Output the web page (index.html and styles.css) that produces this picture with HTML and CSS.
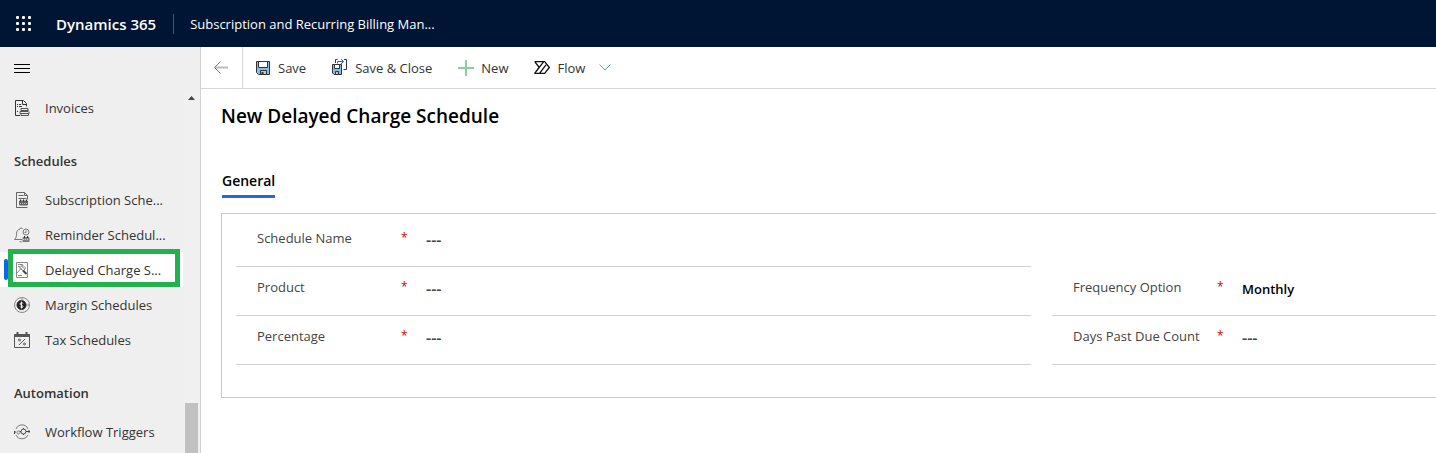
FILE: index.html
```html
<!DOCTYPE html>
<html lang="en">
<head>
<meta charset="utf-8">
<title>New Delayed Charge Schedule - Dynamics 365</title>
<link rel="stylesheet" href="styles.css">
</head>
<body>
<header class="topbar">
  <button class="launcher" type="button" aria-label="App launcher">
    <svg width="16" height="16" viewBox="0 0 16 16" fill="#fff"><rect x="0" y="0" width="3" height="3" rx="1"/><rect x="6" y="0" width="3" height="3" rx="1"/><rect x="12" y="0" width="3" height="3" rx="1"/><rect x="0" y="6" width="3" height="3" rx="1"/><rect x="6" y="6" width="3" height="3" rx="1"/><rect x="12" y="6" width="3" height="3" rx="1"/><rect x="0" y="12" width="3" height="3" rx="1"/><rect x="6" y="12" width="3" height="3" rx="1"/><rect x="12" y="12" width="3" height="3" rx="1"/></svg>
  </button>
  <a class="brand" href="#">Dynamics 365</a>
  <a class="app-name" href="#">Subscription and Recurring Billing Man...</a>
</header>
<div class="shell">
  <aside class="sidebar">
    <button class="menu-toggle" type="button" aria-label="Expand navigation">
      <svg width="16" height="9" viewBox="0 0 16 9" fill="#000"><path d="M0 0h16v1H0zM0 4h16v1H0zM0 8h16v1H0z"/></svg>
    </button>
    <div class="nav-area">
      <nav class="nav">
        <a class="nav-item" href="#">
          <svg width="16" height="16" viewBox="0 0 16 16" fill="none" stroke="#333"><path d="M6 15.500H1.500V.5h8l3 3v3M8.500.5v4h4"/><path d="M3 4.500h1M5 4.500h2M3 6.500h1M5 6.500h3M3 11.500h1"/><path d="M7 8.500h7v2H7zM6 11.500h8v-2M6 11.500v2h9v-2M7 13.500v2h7.500v-2" stroke="#555"/></svg>
          <span>Invoices</span>
        </a>
        <h2 class="nav-heading">Schedules</h2>
        <a class="nav-item" href="#">
          <svg width="16" height="16" viewBox="0 0 16 16" fill="none" stroke="#666"><path d="M13.500 15.500h-11V.5h8l3 3v4M2.500 15.500V.5M10.500.5v3h3M4.500 3.500h5M4.500 6.500h8" /><path d="M5.500 9h8v4h-8z" fill="#666"/><path d="M6.500 7.500v2M9.500 7.500v2M12.500 7.500v2" stroke="#333"/><path d="M6 11.500h7" stroke="#bbb" stroke-dasharray="1 1"/></svg>
          <span>Subscription Sche...</span>
        </a>
        <a class="nav-item" href="#">
          <svg width="16" height="16" viewBox="0 0 16 16" fill="none" stroke="#777"><path d="M8 12.500H.5c2-2 2-3.500 2-6C2.500 4 4 2.500 6 2c0-1.500 2-1.500 2.500 0M5.500 14c1 1.500 2 1.500 2.500.5"/><circle cx="12" cy="5" r="3"/><path d="M12 3.500v2h-1.500"/><path d="M9 10.500h6v4H9z" fill="#888"/><path d="M10.500 9v2M13.500 9v2" stroke="#333"/><path d="M9 12.500h6" stroke="#ccc" stroke-dasharray="1 1"/></svg>
          <span>Reminder Schedul...</span>
        </a>
        <a class="nav-item is-selected" href="#" aria-current="page">
          <svg width="16" height="16" viewBox="0 0 16 16" fill="none" stroke="#888"><path d="M2.500.5h11v15h-11z"/><path d="M4 2.500h5M4 4.500h2M4 13.500h4"/><path d="M3 11l4.500-5M7 3.500l3.500 3.500M5.500 6l3-3 3 3-2 3z"/><path d="M9 8.500l3.500 3.500" stroke="#444" stroke-width="2"/></svg>
          <span>Delayed Charge S...</span>
        </a>
        <a class="nav-item" href="#">
          <svg width="16" height="16" viewBox="0 0 16 16" fill="none" stroke="#888"><circle cx="8" cy="8" r="7.500"/><circle cx="7.500" cy="8" r="4.500" fill="#222" stroke="#222"/><path d="M8 1v3M12 8h4"/><path d="M9 6.500C8.500 5 6 5.500 6 7s3 1 3 2.500-2.500 1.500-3 0M7.500 4.500v7" stroke="#eee"/></svg>
          <span>Margin Schedules</span>
        </a>
        <a class="nav-item" href="#">
          <svg width="16" height="16" viewBox="0 0 16 16" fill="none" stroke="#555"><path d="M.5 2.500h15v13H.5z"/><path d="M.5 2.500h15v2H.5z" fill="#555"/><path d="M3.500 0v3M12.500 0v3" stroke-width="2"/><path d="M11 7l-6 6"/><circle cx="5.500" cy="8" r="1"/><circle cx="10.500" cy="12" r="1"/></svg>
          <span>Tax Schedules</span>
        </a>
        <h2 class="nav-heading">Automation</h2>
        <a class="nav-item" href="#">
          <svg width="16" height="16" viewBox="0 0 16 16" fill="none" stroke="#777"><path d="M2 5C4-.5 12-.5 14 5M2 11c2 5 10 5 12 0"/><circle cx="9.500" cy="7.500" r="2.500" stroke="#444"/><path d="M9.500 4v1M9.500 10v1M12 7.500h2M6 7.500h1" stroke="#444"/><circle cx="4.500" cy="8.500" r="1.500"/><path d="M.5 7v3M0 8h2M15 6v3M14 7.500h2" stroke="#444"/></svg>
          <span>Workflow Triggers</span>
        </a>
      </nav>
      <div class="scrollbar" aria-hidden="true">
        <svg width="7" height="4" viewBox="0 0 7 4"><path d="M0 4L3.500 0 7 4z" fill="#444"/></svg>
        <div class="scroll-thumb"></div>
      </div>
    </div>
  </aside>
  <main class="main">
    <div class="commands" role="toolbar" aria-label="Commands">
      <button class="back" type="button" aria-label="Back">
        <svg width="14" height="13" viewBox="0 0 14 13" fill="none"><path d="M1 6.500h13" stroke="#bbb" stroke-width="2"/><path d="M6.500.5l-6 6 6 6" stroke="#777"/></svg>
      </button>
      <button class="command" type="button">
        <svg width="14" height="14" viewBox="0 0 14 14"><path d="M.5.5h13v13h-11l-2-2z" fill="#83beec" stroke="#333"/><path d="M2.500.5h9v6h-9z" fill="#fff" stroke="#333"/><path d="M4.500 9.500h6v4h-6z" fill="#c8c6c4" stroke="#333"/><path d="M5.500 11h2v2h-2z" fill="#333"/></svg>
        <span>Save</span>
      </button>
      <button class="command" type="button">
        <svg class="wide" width="16" height="17" viewBox="0 0 16 17" fill="none"><path d="M.5 5.500h9v10H2l-1.500-1.500z" fill="#83beec" stroke="#333"/><path d="M2.500 5.500h5v4h-5z" fill="#fff" stroke="#333"/><path d="M3.500 12.500h3v3h-3z" fill="#c8c6c4" stroke="#333"/><path d="M3.500 4V.5h2M12 .5h2.500v10h-3" stroke="#333"/><path d="M5.500 4.500v-2h6M9 0l2.500 2.500L9 5" stroke="#106ebe"/></svg>
        <span>Save &amp; Close</span>
      </button>
      <button class="command" type="button">
        <svg class="wide" width="16" height="16" viewBox="0 0 16 16"><path d="M7 0h2v7h7v2H9v7H7V9H0V7h7z" fill="#88cfa4"/></svg>
        <span>New</span>
      </button>
      <button class="command" type="button">
        <svg class="wide" width="16" height="13" viewBox="0 0 16 13" fill="none" stroke="#111" stroke-width="1.300" stroke-linejoin="round"><path d="M.7.7h10l4.600 5.800-4.600 5.800H.7l9-11.600M.7.700l4.200 5.300M5.500 12.300l6.500-8.500M.7 12.300L5 6.500"/></svg>
        <span>Flow</span>
        <svg class="chevron" width="12" height="7" viewBox="0 0 12 7" fill="none" stroke="#5a9fd0"><path d="M.5.5L6 6 11.500.5"/></svg>
      </button>
    </div>
    <div class="record">
      <h1 class="title">New Delayed Charge Schedule</h1>
      <div class="tabs" role="tablist"><button class="tab" type="button" role="tab" aria-selected="true">General</button></div>
      <form class="section">
        <div class="column">
          <div class="field"><label for="name">Schedule Name</label><span class="required">*</span><input id="name" type="text" value="---"></div>
          <div class="field"><label for="product">Product</label><span class="required">*</span><input id="product" type="text" value="---"></div>
          <div class="field"><label for="percentage">Percentage</label><span class="required">*</span><input id="percentage" type="text" value="---"></div>
        </div>
        <div class="column column-end">
          <div class="field"><label for="frequency">Frequency Option</label><span class="required">*</span><select id="frequency"><option>Monthly</option></select></div>
          <div class="field"><label for="days">Days Past Due Count</label><span class="required">*</span><input id="days" type="text" value="---"></div>
        </div>
      </form>
    </div>
  </main>
</div>
</body>
</html>
```

FILE: styles.css
```css
* { box-sizing: border-box; }

body {
  margin: 0;
  height: 100vh;
  display: flex;
  flex-direction: column;
  overflow: hidden;
  font-family: "Open Sans", "Noto Sans", sans-serif;
  font-size: 13px;
  line-height: 20px;
  color: #333;
  background: #fff;
}

button, input, select {
  font: inherit;
  color: inherit;
  background: none;
  border: 0;
  border-radius: 0;
  padding: 0;
  margin: 0;
}

a { color: inherit; text-decoration: none; }
svg { display: block; flex: none; }

.topbar {
  flex: none;
  height: 47px;
  display: flex;
  align-items: center;
  background: #001433;
  color: #fff;
}
.launcher { padding: 0 16px; }
.brand {
  padding: 0 17px 0 8px;
  font-size: 15px;
  font-weight: 600;
}
.app-name {
  padding-left: 16px;
  border-left: 1px solid #44536b;
}

.shell { flex: 1; display: flex; min-height: 0; }

.sidebar {
  flex: none;
  width: 201px;
  display: flex;
  flex-direction: column;
  background: #efefef;
  border-right: 1px solid #d2d2d2;
}
.menu-toggle {
  flex: none;
  height: 43px;
  padding: 0 14px;
  align-self: flex-start;
}
.nav-area { flex: 1; display: flex; min-height: 0; }
.nav { flex: 1; min-width: 0; }
.nav-item {
  position: relative;
  display: flex;
  align-items: center;
  gap: 15px;
  height: 35px;
  padding-left: 14px;
  white-space: nowrap;
}
.nav-heading {
  margin: 0;
  padding: 26px 14px 11px;
  font-size: 13px;
  font-weight: 600;
}
.is-selected { background: #fff; }
.is-selected::before {
  content: "";
  position: absolute;
  left: 4px;
  top: 7px;
  bottom: 7px;
  width: 4px;
  border-radius: 2px;
  background: #0b64f4;
}
.is-selected::after {
  content: "";
  position: absolute;
  inset: -3px 3px 0 8px;
  border: 5px solid #22b14c;
}
.scrollbar {
  width: 17px;
  display: flex;
  flex-direction: column;
  align-items: center;
  justify-content: space-between;
  padding-top: 6px;
  background: #f0f0f0;
}
.scroll-thumb { width: 13px; height: 50px; background: #c1c1c1; }

.main { flex: 1; min-width: 0; }
.commands {
  display: flex;
  height: 42px;
  border-bottom: 1px solid #d6d6d6;
}
.back {
  padding: 0 14px 0 13px;
  border-right: 1px solid #d6d6d6;
}
.command {
  display: flex;
  align-items: center;
  gap: 8px;
  padding: 0 13px;
}
.command .wide { margin-right: -1px; }
.chevron { margin-left: 6px; }

.record { padding: 14px 0 0 20px; }
.title {
  margin: 0;
  font-size: 19px;
  line-height: 26px;
  font-weight: 600;
  color: #000;
}
.tabs { display: flex; padding: 40px 0 15px 1px; }
.tab {
  padding-bottom: 2px;
  font-size: 14px;
  font-weight: 600;
  line-height: 24px;
  color: #000;
  border-bottom: 3px solid #2266e3;
}
.section {
  display: grid;
  grid-template-columns: 795fr 384fr;
  gap: 21px;
  padding: 4px 0 32px 14px;
  border: 1px solid #c8c8c8;
  border-right: 0;
}
.column-end { padding-top: 49px; }
.field {
  display: grid;
  grid-template-columns: 144px 25px 1fr;
  align-items: center;
  height: 49px;
  padding: 0 0 8px 21px;
  border-bottom: 1px solid #d2d2d2;
  color: #444;
}
.required { color: #e00000; font-size: 12px; }
.field input, .field select {
  width: 100%;
  height: 24px;
  appearance: none;
  font-weight: 600;
  margin-top: 4px;
}
.field input { font-size: 16px; }
.field select { color: #000; }
```
